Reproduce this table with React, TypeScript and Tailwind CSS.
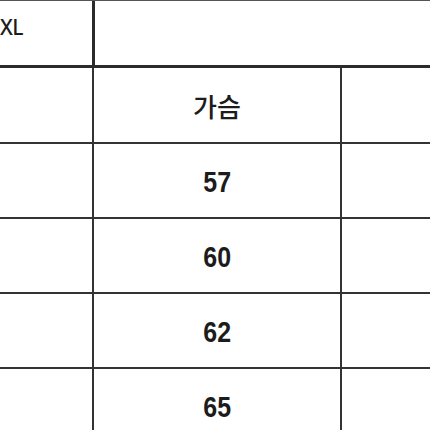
const rows = ["57", "60", "62", "65"];

export default function App() {
  return (
    <div className="h-[430px] w-[430px] overflow-hidden border-t border-[#555] bg-white text-[#1c1c1c]">
      <div className="flex h-[67px] border-b-[3px] border-[#2b2b2b]">
        <div className="flex w-[95px] shrink-0 items-center border-r-[3px] border-[#2b2b2b] pb-[12px]">
          <span className="font-['Noto_Sans',sans-serif] text-[21px] font-medium leading-none tracking-[-0.5px]">
            XL
          </span>
        </div>
        <div className="flex-1" />
      </div>

      <div className="flex h-[76px] border-b-2 border-[#333]">
        <div className="w-[94px] shrink-0 border-r-2 border-[#333]" />
        <div className="flex w-[248px] shrink-0 items-center justify-center border-r-2 border-[#333] pt-[1px]">
          <span className="font-['Noto_Sans_CJK_KR',sans-serif] text-[26px] font-medium leading-none">
            가슴
          </span>
        </div>
        <div className="flex-1" />
      </div>

      {rows.map((v) => (
        <div key={v} className="flex h-[75px] border-b-2 border-[#333]">
          <div className="w-[94px] shrink-0 border-r-2 border-[#333]" />
          <div className="flex w-[248px] shrink-0 items-center justify-center border-r-2 border-[#333] pt-[4px]">
            <span className="inline-block scale-x-[0.86] font-['Liberation_Sans',sans-serif] text-[29px] font-bold leading-none">
              {v}
            </span>
          </div>
          <div className="flex-1" />
        </div>
      ))}
    </div>
  );
}
